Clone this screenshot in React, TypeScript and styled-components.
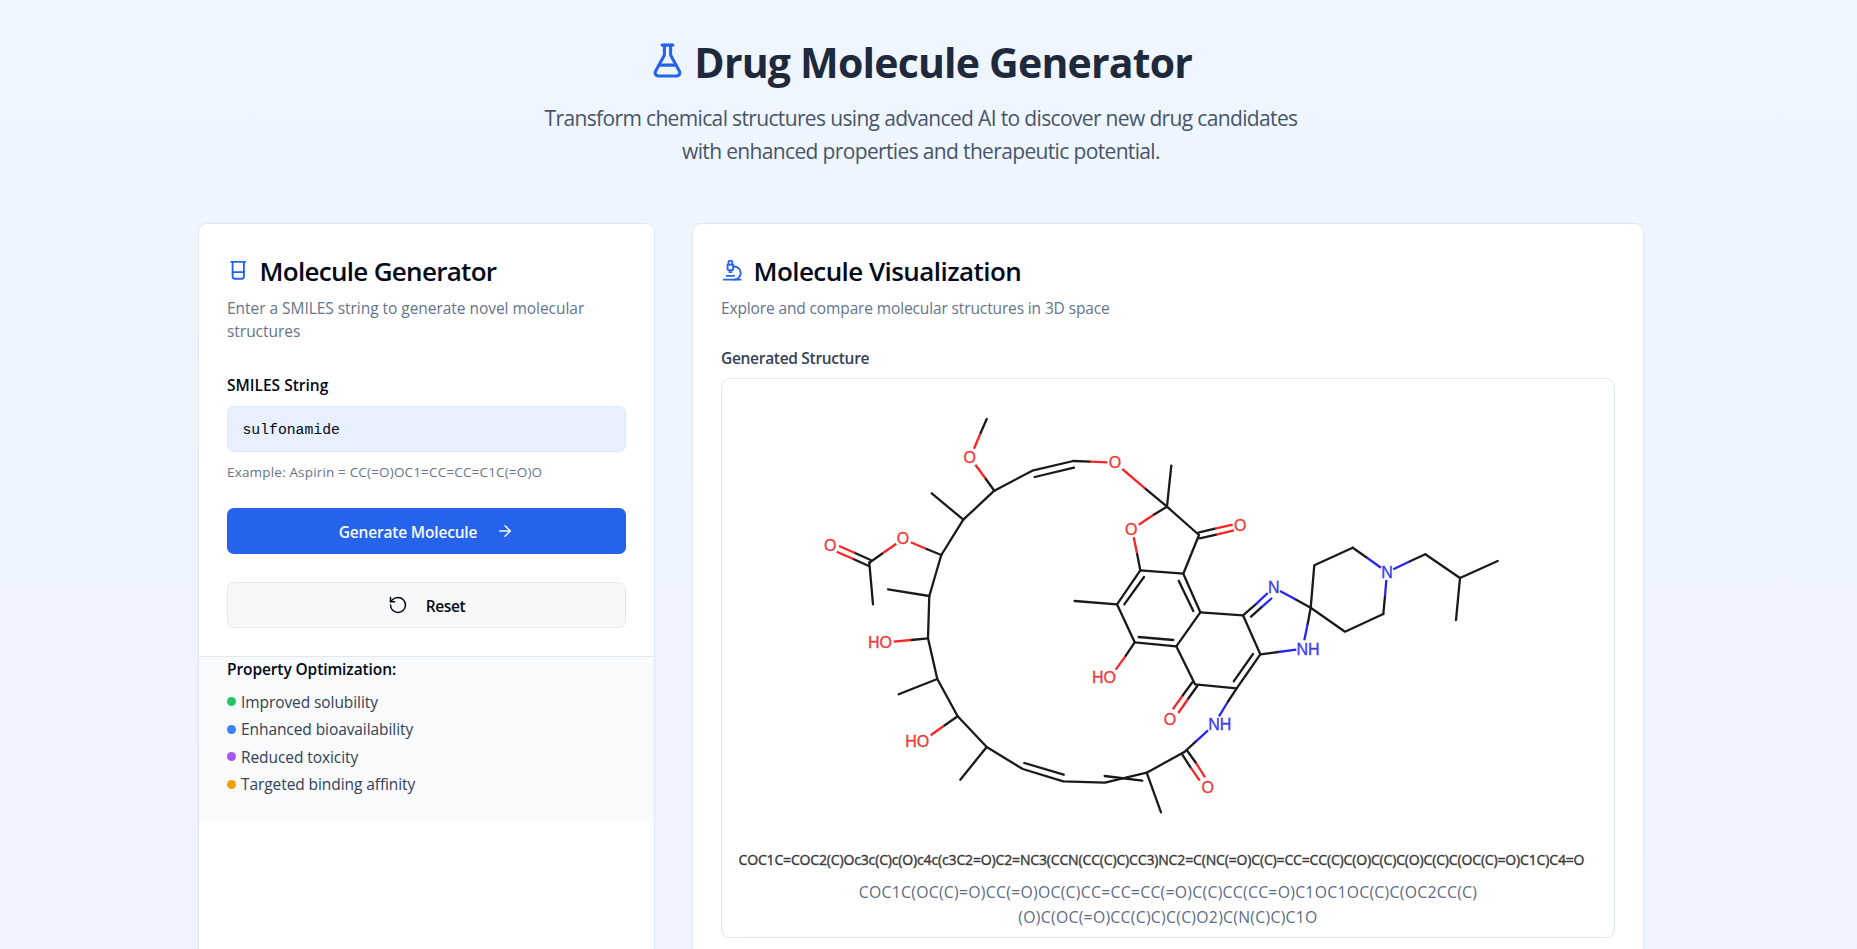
import React from 'react';
import styled, { createGlobalStyle } from 'styled-components';
import { ArrowRight, Beaker, FlaskConical, Microscope, RotateCcw } from 'lucide-react';

const GlobalStyle = createGlobalStyle`
  *, *::before, *::after { box-sizing: border-box; }
  html, body { margin: 0; padding: 0; }
  body {
    font-family: "Segoe UI", "Open Sans", "Noto Sans", sans-serif;
    color: #020817;
  }
  h1, h2, h3, p, ul { margin: 0; padding: 0; font-weight: inherit; }
`;

const Page = styled.main`
  height: 100vh;
  overflow: hidden;
  padding: 39.5px 15px 0 0;
  background: linear-gradient(to bottom, #eff6ff, #eef2ff) 0 0 / 100% 1120px no-repeat;
  display: flex;
  flex-direction: column;
  align-items: center;
`;

const Hero = styled.header`
  display: flex;
  flex: none;
  flex-direction: column;
  align-items: center;
  text-align: center;
`;

const HeroTitle = styled.h1`
  display: flex;
  gap: 8.5px;
  height: 45px;
  font-size: 41px;
  line-height: 45px;
  font-weight: 700;
  letter-spacing: -0.8px;
  color: #1e293b;
  svg { color: #2563eb; margin: 2.3px -0.5px 0; }
`;

const HeroText = styled.p`
  width: 800px;
  margin-top: 17px;
  font-size: 21px;
  line-height: 33px;
  letter-spacing: -0.65px;
  color: #475569;
`;

const Columns = styled.div`
  display: grid;
  flex: 1;
  grid-template-columns: 457px 952px;
  column-gap: 37px;
  width: 1446px;
  min-height: 0;
  margin-top: 55.5px;
`;

const Card = styled.section`
  display: flex;
  flex-direction: column;
  height: 840px;
  background: #fff;
  border: 1px solid #e2e8f0;
  border-radius: 9px;
  box-shadow: 0 1px 2px rgba(0, 0, 0, 0.05);
`;

const CardBody = styled.div`
  display: flex;
  flex-direction: column;
  padding: 33.8px 28px 28.3px;
`;

const CardTitle = styled.h2<{ $track: number }>`
  display: flex;
  align-items: center;
  gap: 10px;
  height: 27px;
  font-size: 26px;
  line-height: 27px;
  font-weight: 600;
  letter-spacing: ${p => p.$track}px;
  white-space: nowrap;
  svg { color: #2563eb; flex: none; position: relative; top: -1px; }
`;

const CardText = styled.p<{ $track: number }>`
  margin-top: 12px;
  font-size: 15.5px;
  line-height: 23px;
  letter-spacing: ${p => p.$track}px;
  color: #64748b;
`;

const FieldLabel = styled.label`
  margin-top: 34px;
  font-size: 15.5px;
  line-height: 16px;
  font-weight: 600;
`;

const Field = styled.input`
  width: 100%;
  height: 46px;
  margin-top: 13.7px;
  padding: 2px 14.5px 0;
  font: 14.75px "Liberation Mono", monospace;
  color: #020817;
  background: #e8f0fe;
  border: 1px solid #e2e8f0;
  border-radius: 6.75px;
  outline: none;
`;

const Hint = styled.p`
  margin-top: 10.3px;
  font-size: 13.5px;
  line-height: 18px;
  letter-spacing: 0.17px;
  color: #64748b;
`;

const Button = styled.button<{ $primary?: boolean }>`
  display: flex;
  align-items: center;
  justify-content: center;
  gap: ${p => (p.$primary ? 19 : 18)}px;
  width: 100%;
  height: 45.7px;
  margin-top: ${p => (p.$primary ? 27.2 : 28.3)}px;
  padding: 0;
  font: 600 15.5px "Segoe UI", "Open Sans", sans-serif;
  letter-spacing: ${p => (p.$primary ? -0.18 : -0.4)}px;
  color: ${p => (p.$primary ? '#f8fafc' : '#020817')};
  background: ${p => (p.$primary ? '#2563eb' : '#f6f8fa')};
  border: ${p => (p.$primary ? '0' : '1px solid #e2e8f0')};
  border-radius: 6.75px;
  span { padding-top: 2px; }
`;

const CardFooter = styled.footer`
  padding: 1.2px 28px 27.6px;
  background: #f8fafc;
  border-top: 1px solid #e2e8f0;
`;

const FooterTitle = styled.h3`
  font-size: 15.5px;
  line-height: 22px;
  font-weight: 600;
  letter-spacing: -0.1px;
`;

const PropertyList = styled.ul`
  display: flex;
  flex-direction: column;
  gap: 5px;
  margin-top: 10.5px;
  list-style: none;
`;

const Property = styled.li<{ $dot: string }>`
  display: flex;
  align-items: center;
  gap: 5px;
  font-size: 15.5px;
  line-height: 22.5px;
  letter-spacing: -0.08px;
  color: #334155;
  &::before {
    content: '';
    width: 9px;
    height: 9px;
    border-radius: 50%;
    background: ${p => p.$dot};
  }
`;

const StructureTitle = styled.h3`
  margin-top: 27.7px;
  font-size: 15.5px;
  line-height: 23px;
  font-weight: 600;
  letter-spacing: -0.3px;
  color: #334155;
`;

const StructureBox = styled.div`
  height: 560px;
  margin-top: 8px;
  border: 1px solid #e2e8f0;
  border-radius: 9px;
  svg { display: block; }
`;

const StructureCaption = styled.p`
  font-size: 15.75px;
  line-height: 24.5px;
  letter-spacing: 0.29px;
  text-align: center;
  color: #5c6c84;
`;

const RED = '#f72525';
const BLUE = '#2525f5';

/** Carbon–carbon strokes, each a chain of x,y points. */
const CHAINS = [
  '994.3,491.7 1032.3,471.7 1073.3,462',
  '1034.7,478 1074,468.7',
  '1171.3,466.7 1167,507.7 1199,536 1183.3,574.7 1140.3,571.3 1117,605.3 1134.7,643.3 1176.3,647.3 1200.3,613.3 1183.3,574.7',
  '1117,605.3 1074.7,602',
  '1144,578 1124.3,605.3',
  '1178.7,581.7 1193.3,612',
  '1138.7,638 1173.3,641',
  '994.3,491.7 963.3,520.7 941.3,556 929.3,597 928,639.3 937.3,680 957.7,717.3 986.7,748 1022.7,770 1063.3,782.3 1105,783.7 1146.7,773.7 1184.3,753',
  '963.3,520.7 931.7,494.3',
  '869.3,563.7 873,605.3',
  '929.3,597 888,590.3',
  '937.3,680 898.7,695.3',
  '986.7,748 960.3,780.7',
  '1024.3,764 1063.7,775.7',
  '1104.7,777 1142.3,781.7',
  '1146.7,773.7 1161,813.3',
  '1200.3,613.3 1243,616.3 1260.3,655.3 1236.7,689.3 1195,685.3 1176.3,647.3',
  '1253,655 1233.7,682.3',
  '1352.7,548.7 1314.3,566.3 1310.7,608.7 1345,632.7 1383.3,615',
  '1425.3,555.3 1460,579 1497.7,562',
  '1460,579 1456,621',
];

/** Bonds from carbon to a hetero atom: carbon end, colour change, atom end. */
const BONDS: [number, number, number, number, number, number, string][] = [
  [986.7, 420, 980.3, 434.7, 974, 449.7, RED],
  [994.3, 491.7, 985.3, 479.3, 975.3, 465.7, RED],
  [1073.3, 462, 1090, 462.7, 1107.3, 463.3, RED],
  [1167, 507.7, 1145, 489.3, 1122.3, 470, RED],
  [1167, 507.7, 1153.3, 516, 1138.7, 525.7, RED],
  [1140.3, 571.3, 1137, 554.3, 1133.7, 538.3, RED],
  [1198.3, 533.7, 1215, 529.7, 1232.7, 525.7, RED],
  [1199.7, 539.3, 1216.3, 535.7, 1234, 531.3, RED],
  [941.3, 556, 926, 549.7, 910.7, 543.3, RED],
  [869.3, 563.7, 882.7, 554.3, 896.3, 544.7, RED],
  [870.7, 561, 855, 554, 839, 547, RED],
  [868.3, 566.7, 853.3, 560, 836.7, 552.7, RED],
  [928, 639.3, 911, 641, 893.7, 642.7, RED],
  [957.7, 717.3, 944, 726.7, 930.7, 736.3, RED],
  [1134.7, 643.3, 1125.3, 657.3, 1115.7, 670.7, RED],
  [1192.3, 683.3, 1182.3, 697, 1172.7, 710.3, RED],
  [1197.3, 687, 1188, 700, 1178.3, 714, RED],
  [1186.7, 751, 1196, 764, 1205, 778.3, RED],
  [1181.7, 754.7, 1190.7, 768.7, 1199.7, 781.7, RED],
  [1184.3, 753, 1196, 742.3, 1208, 731.3, BLUE],
  [1236.7, 689.3, 1227.7, 703, 1219, 717.3, BLUE],
  [1243, 616.3, 1255.7, 605.3, 1267.7, 594, BLUE],
  [1251, 617.7, 1261.3, 608.3, 1272, 599, BLUE],
  [1310.7, 608.7, 1295.3, 600.3, 1280, 592, BLUE],
  [1310.7, 608.7, 1307.7, 624.7, 1304.3, 641.3, BLUE],
  [1260.3, 655.3, 1278.3, 653, 1296.3, 650.7, BLUE],
  [1352.7, 548.7, 1367, 558.7, 1381, 568.7, BLUE],
  [1383.3, 615, 1385, 597.3, 1386.3, 581, BLUE],
  [1425.3, 555.3, 1409, 562.7, 1393.3, 570.3, BLUE],
];

/** Atom labels by the centre of their text. */
const ATOMS: [string, number, number][] = [
  ['O', 969.7, 458], ['O', 1115, 463.7], ['O', 1131.3, 530], ['O', 1240.3, 526.7],
  ['O', 903, 539.7], ['O', 830.3, 546.7], ['HO', 880, 643.7], ['HO', 917.3, 742.3],
  ['HO', 1104, 678.7], ['O', 1170, 720.3], ['O', 1207.7, 788.7],
  ['NH', 1219.7, 725.3], ['NH', 1308, 650.3], ['N', 1273.7, 588], ['N', 1387, 573.3],
];

const SMILES =
  'COC1C=COC2(C)Oc3c(C)c(O)c4c(c3C2=O)C2=NC3(CCN(CC(C)C)CC3)NC2=C(NC(=O)C(C)=CC=CC(C)C(O)C(C)C(O)C(C)C(OC(C)=O)C1C)C4=O';

const MoleculeDrawing = () => (
  <svg width="892" height="501" viewBox="722 380 892 501">
    <g fill="none" stroke="#1a1a1a" strokeWidth="2.3" strokeLinecap="round" strokeLinejoin="round">
      {CHAINS.map(points => <polyline key={points} points={points} />)}
      {BONDS.map(([x1, y1, mx, my, x2, y2, color]) => (
        <g key={`${x1},${y1},${x2}`}>
          <line x1={x1} y1={y1} x2={mx} y2={my} />
          <line x1={mx} y1={my} x2={x2} y2={y2} stroke={color} strokeLinecap="butt" />
        </g>
      ))}
    </g>
    <g fontFamily="Liberation Sans, Arial, sans-serif" fontSize="16" textAnchor="middle" strokeWidth="0.35">
      {ATOMS.map(([label, x, y]) => {
        const color = label.startsWith('N') ? '#3a3af0' : '#f03a3a';
        return (
          <text key={`${x},${y}`} x={x} y={y + 5.6} fill={color} stroke={color}>
            {label}
          </text>
        );
      })}
    </g>
    <text x="738.5" y="866.4" textLength="846" fontSize="14" fill="#3a3a3a" stroke="#3a3a3a" strokeWidth="0.4">
      {SMILES}
    </text>
  </svg>
);

export default function App() {
  return (
    <>
      <GlobalStyle />
      <Page>
        <Hero>
          <HeroTitle>
            <FlaskConical size={37} />
            Drug Molecule Generator
          </HeroTitle>
          <HeroText>
            Transform chemical structures using advanced AI to discover new drug candidates
            <br />
            with enhanced properties and therapeutic potential.
          </HeroText>
        </Hero>
        <Columns>
          <Card>
            <CardBody>
              <CardTitle $track={-0.7}>
                <Beaker size={22.5} />
                Molecule Generator
              </CardTitle>
              <CardText $track={-0.04}>
                Enter a SMILES string to generate novel molecular structures
              </CardText>
              <FieldLabel htmlFor="smiles">SMILES String</FieldLabel>
              <Field id="smiles" defaultValue="sulfonamide" spellCheck={false} />
              <Hint>Example: Aspirin = CC(=O)OC1=CC=CC=C1C(=O)O</Hint>
              <Button $primary>
                <span>Generate Molecule</span>
                <ArrowRight size={18} />
              </Button>
              <Button>
                <RotateCcw size={20} strokeWidth={1.8} />
                <span>Reset</span>
              </Button>
            </CardBody>
            <CardFooter>
              <FooterTitle>Property Optimization:</FooterTitle>
              <PropertyList>
                <Property $dot="#22c55e">Improved solubility</Property>
                <Property $dot="#3b82f6">Enhanced bioavailability</Property>
                <Property $dot="#a855f7">Reduced toxicity</Property>
                <Property $dot="#f59e0b">Targeted binding affinity</Property>
              </PropertyList>
            </CardFooter>
          </Card>
          <Card>
            <CardBody>
              <CardTitle $track={-0.56}>
                <Microscope size={22.5} />
                Molecule Visualization
              </CardTitle>
              <CardText $track={-0.13}>Explore and compare molecular structures in 3D space</CardText>
              <StructureTitle>Generated Structure</StructureTitle>
              <StructureBox>
                <MoleculeDrawing />
                <StructureCaption>
                  COC1C(OC(C)=O)CC(=O)OC(C)CC=CC=CC(=O)C(C)CC(CC=O)C1OC1OC(C)C(OC2CC(C)
                  <br />
                  (O)C(OC(=O)CC(C)C)C(C)O2)C(N(C)C)C1O
                </StructureCaption>
              </StructureBox>
            </CardBody>
          </Card>
        </Columns>
      </Page>
    </>
  );
}
